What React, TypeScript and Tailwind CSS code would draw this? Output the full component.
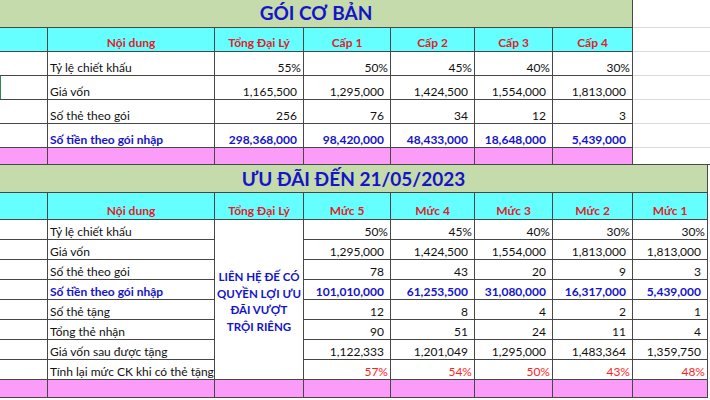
import React from 'react';

const LINE = 'border-[#474747]';
const cell = `border-r border-b ${LINE} flex items-end whitespace-nowrap overflow-hidden`;

const topHead = ['Nội dung', 'Tổng Đại Lý', 'Cấp 1', 'Cấp 2', 'Cấp 3', 'Cấp 4'];
const topRows: { label: string; values: string[]; bold?: boolean }[] = [
  { label: 'Tỷ lệ chiết khấu', values: ['55%', '50%', '45%', '40%', '30%'] },
  { label: 'Giá vốn', values: ['1,165,500', '1,295,000', '1,424,500', '1,554,000', '1,813,000'] },
  { label: 'Số thẻ theo gói', values: ['256', '76', '34', '12', '3'] },
  {
    label: 'Số tiền theo gói nhập',
    values: ['298,368,000', '98,420,000', '48,433,000', '18,648,000', '5,439,000'],
    bold: true,
  },
];

const bottomHead = ['Nội dung', 'Tổng Đại Lý', 'Mức 5', 'Mức 4', 'Mức 3', 'Mức 2', 'Mức 1'];
const bottomRows: { label: string; values: string[]; bold?: boolean; red?: boolean }[] = [
  { label: 'Tỷ lệ chiết khấu', values: ['50%', '45%', '40%', '30%', '30%'] },
  { label: 'Giá vốn', values: ['1,295,000', '1,424,500', '1,554,000', '1,813,000', '1,813,000'] },
  { label: 'Số thẻ theo gói', values: ['78', '43', '20', '9', '3'] },
  {
    label: 'Số tiền theo gói nhập',
    values: ['101,010,000', '61,253,500', '31,080,000', '16,317,000', '5,439,000'],
    bold: true,
  },
  { label: 'Số thẻ tặng', values: ['12', '8', '4', '2', '1'] },
  { label: 'Tổng thẻ nhận', values: ['90', '51', '24', '11', '4'] },
  { label: 'Giá vốn sau được tặng', values: ['1,122,333', '1,201,049', '1,295,000', '1,483,364', '1,359,750'] },
  { label: 'Tính lại mức CK khi có thẻ tặng', values: ['57%', '54%', '50%', '43%', '48%'], red: true },
];

function Value({ v, bold, red }: { v: string; bold?: boolean; red?: boolean }) {
  // percentages sit closer to the right border than the number formats
  const pad = v.endsWith('%') ? 'pr-[2px]' : 'pr-[6px]';
  const color = bold ? 'text-[#1414c8] font-bold' : red ? 'text-[#ff1f1f]' : 'text-[#111]';
  return <div className={`${cell} justify-end pb-[1px] ${pad} ${color}`}>{v}</div>;
}

function Header({ text }: { text: string }) {
  return (
    <div className={`${cell} justify-center pb-[2px] bg-[#66ffff] font-bold text-[#e0212a]`}>{text}</div>
  );
}

export default function App() {
  return (
    <div
      className="w-[710px] h-[400px] overflow-hidden bg-white text-[12px] leading-none"
      style={{ fontFamily: 'Lato, "Noto Sans", sans-serif' }}
    >
      {/* Gói cơ bản */}
      <div className="flex">
        <div className="w-[633px] flex flex-col">
          <div className={`h-[28px] bg-[#c5dbac] border-r border-b ${LINE} flex items-end justify-center pb-[5px] text-[19px] font-bold text-[#1414c8]`}>
            GÓI CƠ BẢN
          </div>
          <div className="grid grid-cols-[48px_167px_89px_87px_84px_78px_80px] grid-rows-[24px_repeat(4,24px)_17px]">
            <div className={`${cell} bg-[#66ffff]`} />
            {topHead.map((h) => (
              <Header key={h} text={h} />
            ))}
            {topRows.map((r, i) => (
              <React.Fragment key={r.label}>
                <div className={`${cell} ${i === 1 ? 'shadow-[inset_1px_0_0_#2f8a4f]' : ''}`} />
                <div
                  className={`${cell} pl-[2px] pb-[1px] ${r.bold ? 'font-bold text-[#1414c8]' : 'text-[#111]'}`}
                >
                  {r.label}
                </div>
                {r.values.map((v, j) => (
                  <Value key={j} v={v} bold={r.bold} />
                ))}
              </React.Fragment>
            ))}
            {Array.from({ length: 7 }).map((_, i) => (
              <div key={i} className={`${cell} bg-[#fc9cf9]`} />
            ))}
          </div>
        </div>
        {/* empty sheet cells to the right */}
        <div className="flex-1 flex flex-col">
          {[28, 24, 24, 24, 24, 24, 17].map((h, i) => (
            <div key={i} className={`border-b border-[#dadada] ${i === 6 ? 'border-b-[#474747]' : ''}`} style={{ height: h }} />
          ))}
        </div>
      </div>

      {/* Ưu đãi */}
      <div className="flex">
        <div className="w-[708px] flex flex-col">
          <div className={`h-[28px] bg-[#c5dbac] border-r border-b ${LINE} flex items-end justify-center pb-[4px] text-[19px] font-bold text-[#1414c8]`}>
            ƯU ĐÃI ĐẾN 21/05/2023
          </div>
          <div className="grid grid-cols-[48px_167px_89px_87px_84px_78px_80px_75px] grid-rows-[27px_repeat(8,20px)_18px]">
            <div className={`${cell} bg-[#66ffff]`} />
            {bottomHead.map((h) => (
              <Header key={h} text={h} />
            ))}
            {bottomRows.map((r, i) => (
              <React.Fragment key={r.label}>
                <div className={cell} />
                <div
                  className={`${cell} pl-[2px] pb-[1px] ${r.bold ? 'font-bold text-[#1414c8]' : 'text-[#111]'}`}
                >
                  {r.label}
                </div>
                {i === 0 && (
                  <div
                    className={`row-span-8 border-r border-b ${LINE} flex items-center justify-center text-center font-bold text-[11.5px] text-[#1414c8] leading-[16.5px] pt-[5px]`}
                  >
                    LIÊN HỆ ĐẾ CÓ
                    <br />
                    QUYỀN LỢI ƯU
                    <br />
                    ĐÃI VƯỢT
                    <br />
                    TRỘI RIÊNG
                  </div>
                )}
                {r.values.map((v, j) => (
                  <Value key={j} v={v} bold={r.bold} red={r.red} />
                ))}
              </React.Fragment>
            ))}
            {Array.from({ length: 8 }).map((_, i) => (
              <div key={i} className={`${cell} bg-[#fc9cf9]`} />
            ))}
          </div>
        </div>
        <div className="flex-1" />
      </div>
    </div>
  );
}
